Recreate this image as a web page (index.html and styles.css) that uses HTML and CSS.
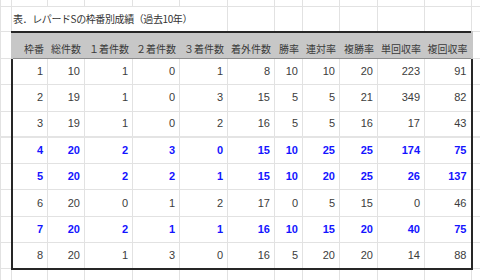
FILE: index.html
```html
<!DOCTYPE html>
<html lang="ja">
<head>
<meta charset="utf-8">
<title>レパードSの枠番別成績</title>
<link rel="stylesheet" href="styles.css">
</head>
<body>
<table class="sheet">
  <colgroup>
    <col class="w11"><col class="w36"><col class="w37"><col class="w48"><col class="w47"><col class="w48">
    <col class="w47"><col class="w28"><col class="w37"><col class="w38"><col class="w47"><col class="w47"><col class="w20">
  </colgroup>
  <tr class="r-top"><td></td><td></td><td></td><td></td><td></td><td></td><td></td><td></td><td></td><td></td><td></td><td></td><td></td></tr>
  <tr class="r-title"><td></td><td class="title" colspan="5">表．レパードSの枠番別成績（過去10年）</td><td></td><td></td><td></td><td></td><td></td><td></td><td></td></tr>
  <tr class="r-head"><td></td><th class="first">枠番</th><th>総件数</th><th>１着件数</th><th>２着件数</th><th>３着件数</th><th>着外件数</th><th>勝率</th><th>連対率</th><th>複勝率</th><th>単回収率</th><th class="last">複回収率</th><td></td></tr>
  <tr class="r-data"><td></td><td class="first">1</td><td>10</td><td>1</td><td>0</td><td>1</td><td>8</td><td>10</td><td>10</td><td>20</td><td>223</td><td class="last">91</td><td></td></tr>
  <tr class="r-data"><td></td><td class="first">2</td><td>19</td><td>1</td><td>0</td><td>3</td><td>15</td><td>5</td><td>5</td><td>21</td><td>349</td><td class="last">82</td><td></td></tr>
  <tr class="r-data"><td></td><td class="first">3</td><td>19</td><td>1</td><td>0</td><td>2</td><td>16</td><td>5</td><td>5</td><td>16</td><td>17</td><td class="last">43</td><td></td></tr>
  <tr class="r-data hi gap"><td></td><td class="first">4</td><td>20</td><td>2</td><td>3</td><td>0</td><td>15</td><td>10</td><td>25</td><td>25</td><td>174</td><td class="last">75</td><td></td></tr>
  <tr class="r-data hi"><td></td><td class="first">5</td><td>20</td><td>2</td><td>2</td><td>1</td><td>15</td><td>10</td><td>20</td><td>25</td><td>26</td><td class="last">137</td><td></td></tr>
  <tr class="r-data"><td></td><td class="first">6</td><td>20</td><td>0</td><td>1</td><td>2</td><td>17</td><td>0</td><td>5</td><td>15</td><td>0</td><td class="last">46</td><td></td></tr>
  <tr class="r-data hi"><td></td><td class="first">7</td><td>20</td><td>2</td><td>1</td><td>1</td><td>16</td><td>10</td><td>15</td><td>20</td><td>40</td><td class="last">75</td><td></td></tr>
  <tr class="r-data end"><td></td><td class="first">8</td><td>20</td><td>1</td><td>3</td><td>0</td><td>16</td><td>5</td><td>20</td><td>20</td><td>14</td><td class="last">88</td><td></td></tr>
  <tr class="r-bottom"><td></td><td></td><td></td><td></td><td></td><td></td><td></td><td></td><td></td><td></td><td></td><td></td><td></td></tr>
</table>
</body>
</html>
```
FILE: styles.css
```css
html, body {
  margin: 0;
  padding: 0;
  background: #ffffff;
  overflow: hidden;
  width: 480px;
  height: 280px;
}

.sheet {
  border-collapse: collapse;
  table-layout: fixed;
  width: 491px;
  margin-top: -20px;
  font-family: "Liberation Sans", "Noto Sans CJK JP", sans-serif;
  color: #3c3c3c;
}

.w11 { width: 11px; }
.w20 { width: 20px; }
.w28 { width: 28px; }
.w36 { width: 36px; }
.w37 { width: 37px; }
.w38 { width: 38px; }
.w47 { width: 47px; }
.w48 { width: 48px; }

.sheet td,
.sheet th {
  border: 1px solid #e2e2e2;
  padding: 0 4px 0 0;
  font-size: 11px;
  line-height: 13px;
  text-align: right;
  vertical-align: middle;
  white-space: nowrap;
  overflow: hidden;
}

.r-top { height: 26px; }
.r-title { height: 25px; }
.r-head { height: 27px; }
.r-data { height: 26.3px; }
.r-bottom { height: 20px; }

.sheet .title {
  text-align: left;
  padding-left: 1px;
  font-family: "Noto Sans CJK JP", sans-serif;
  font-size: 10px;
  letter-spacing: -0.4px;
  color: #333333;
}

.sheet .r-head th {
  background: #c7c7c7;
  border-color: #c7c7c7;
  border-top: 2px solid #262626;
  border-bottom: 1px solid #8e8e8e;
  font-family: "Noto Sans CJK JP", sans-serif;
  font-weight: normal;
  font-size: 10px;
  color: #3a3a3a;
  vertical-align: bottom;
  padding: 0 3px 3px 0;
}

.sheet .gap td { border-top: 2px solid #e4e4e4; }

.sheet .first { border-left: 2px solid #262626; }
.sheet .last { border-right: 2px solid #262626; }
.sheet .end td.first,
.sheet .end td.first ~ td:not(:last-child) { border-bottom: 2px solid #262626; }

.sheet .hi td {
  color: #1414ff;
  font-weight: bold;
}
```
